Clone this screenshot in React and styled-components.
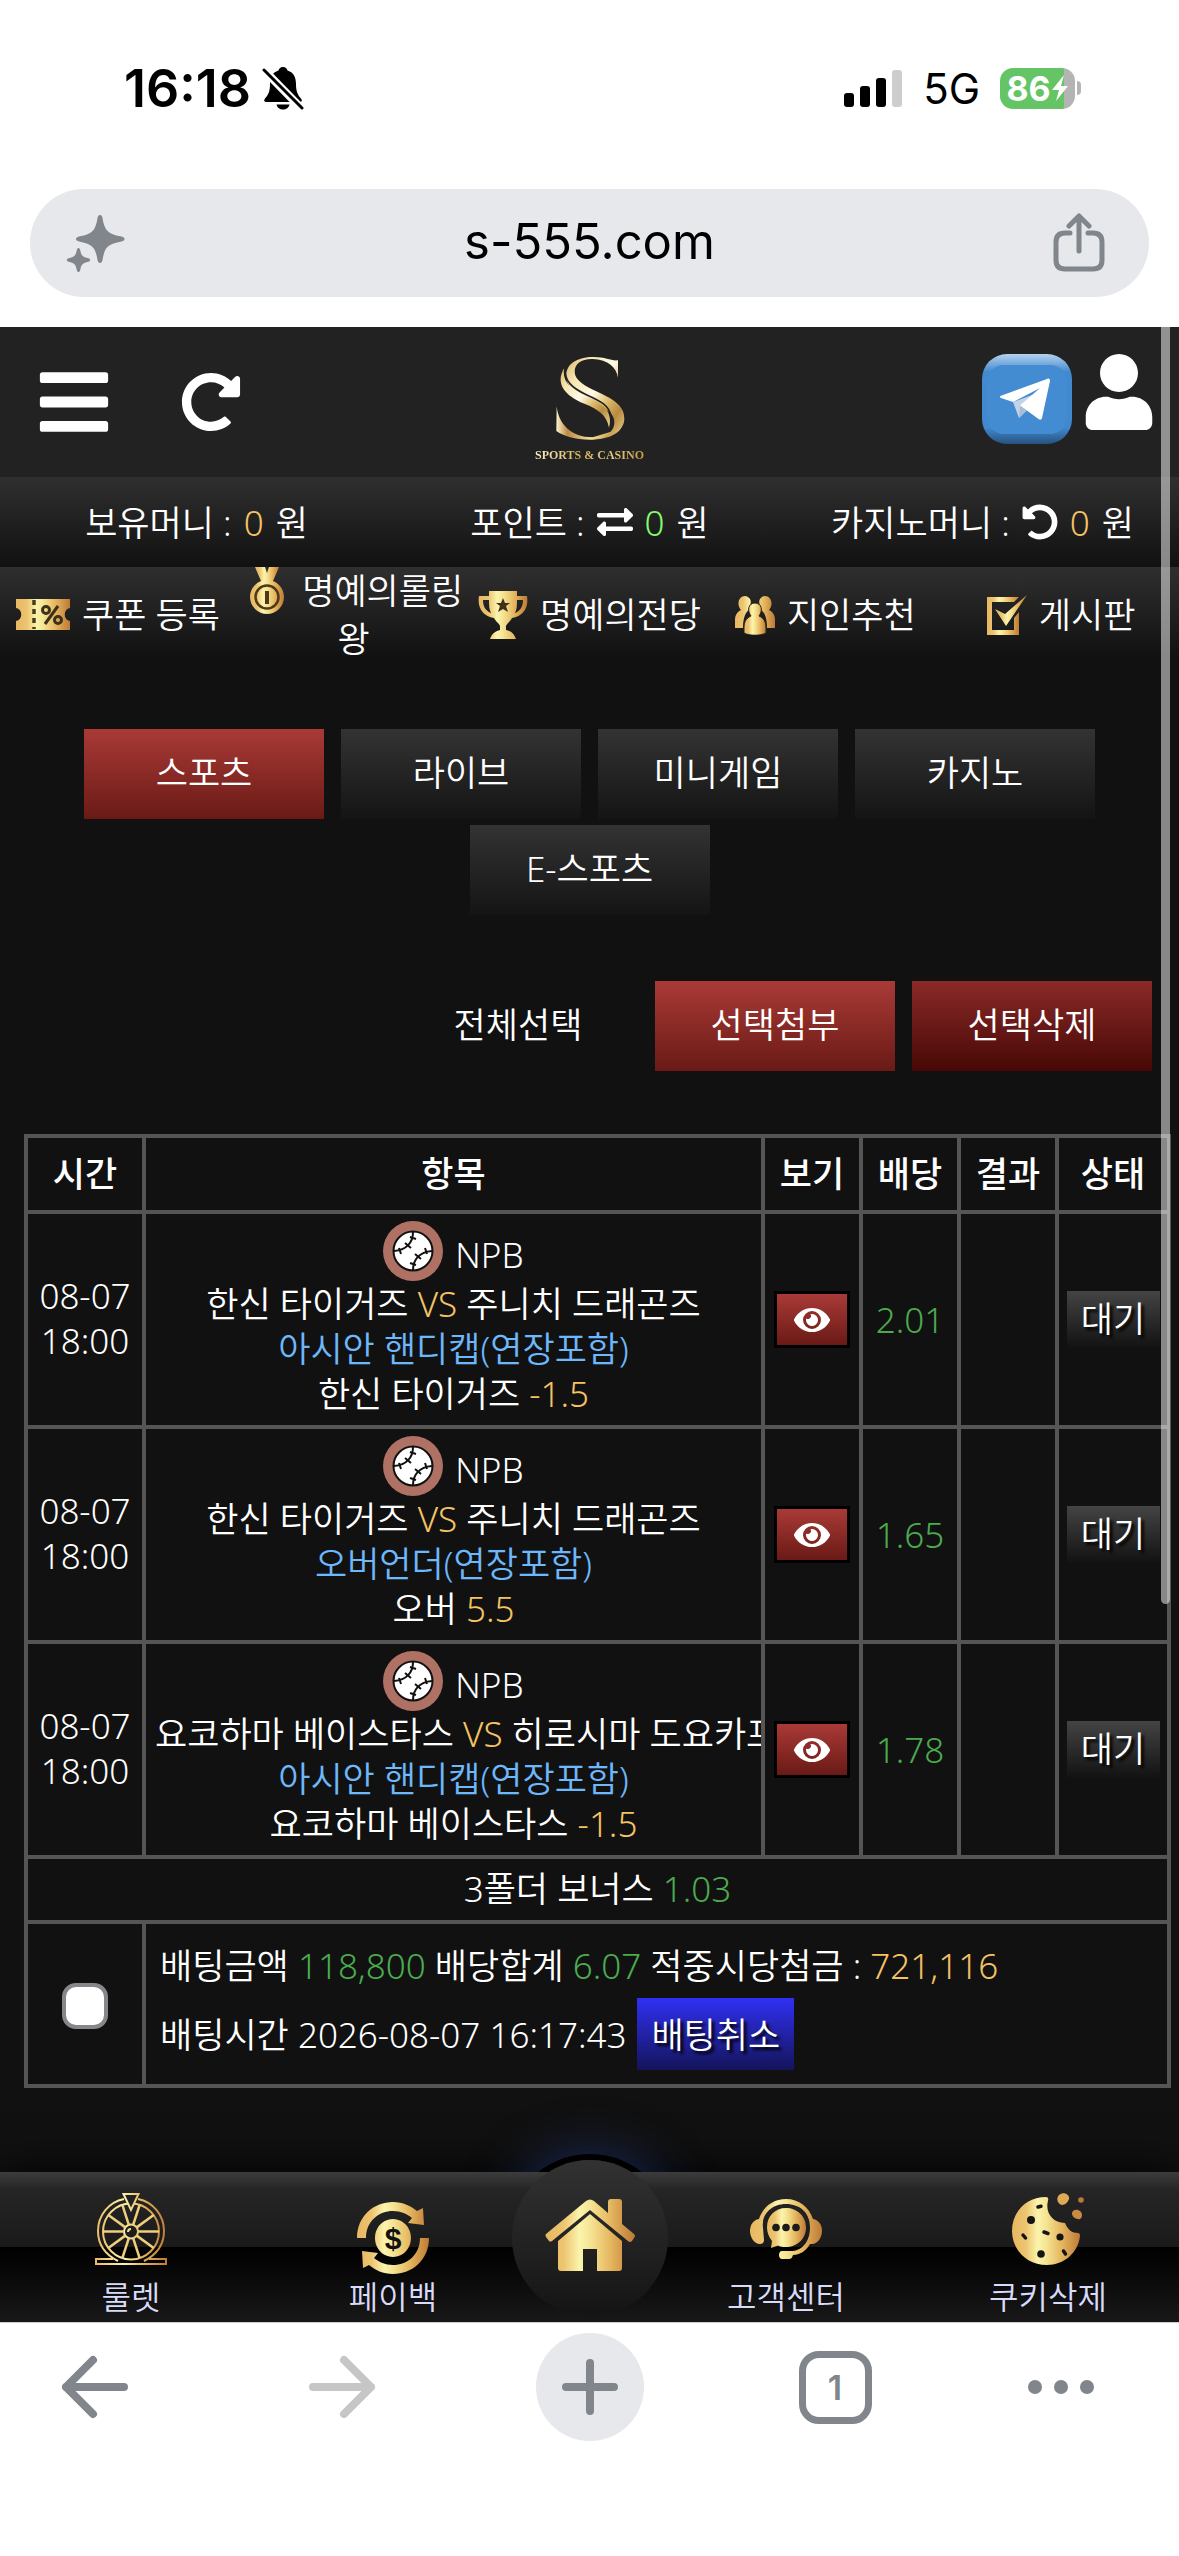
import React, { useState } from 'react';
import styled, { createGlobalStyle, css } from 'styled-components';
import { FaBars, FaRedoAlt, FaUser, FaExchangeAlt, FaUndoAlt, FaEye } from 'react-icons/fa';

const GlobalStyle = createGlobalStyle`
  * {
    box-sizing: border-box;
  }

  body {
    margin: 0;
    background: #fff;
    color: #fff;
    font-family: 'Noto Sans', 'Noto Sans CJK KR', sans-serif;
    font-size: 35px;
    font-weight: 350;
    line-height: 45px;
  }

  button, input {
    font: inherit;
    color: inherit;
    border: 0;
    padding: 0;
    background: none;
  }

  a {
    color: inherit;
    text-decoration: none;
  }

  svg {
    display: block;
    flex: none;
  }
`;

const Shell = styled.div`
  display: flex;
  flex-direction: column;
  min-height: 100vh;
`;

/* ---------- phone and browser chrome ---------- */

const StatusBar = styled.div`
  display: flex;
  justify-content: space-between;
  align-items: center;
  height: 176px;
  padding: 0 98px 0 124px;
  color: #000;
  font-family: Inter, 'Liberation Sans', sans-serif;
`;

const StatusGroup = styled.div`
  display: flex;
  align-items: center;
  gap: ${props => props.$gap}px;
`;

const Clock = styled.span`
  font-size: 52px;
  font-weight: 600;
`;

const Network = styled.span`
  font-size: 42px;
  font-weight: 400;
`;

const Battery = styled.div`
  display: flex;
  align-items: center;
  gap: 2px;

  &::after {
    content: '';
    width: 4px;
    height: 14px;
    border-radius: 0 4px 4px 0;
    background: #b4b4b4;
  }
`;

const BatteryLevel = styled.div`
  display: flex;
  align-items: center;
  justify-content: center;
  width: 75px;
  height: 41px;
  border-radius: 13px;
  background: linear-gradient(to right, #65c466 86%, #b4b4b4 86%);
  color: #fff;
  font-size: 34px;
  font-weight: 700;
`;

const AddressRow = styled.div`
  padding: 13px 30px 30px;
`;

const AddressBar = styled.div`
  display: flex;
  align-items: center;
  justify-content: space-between;
  height: 108px;
  padding: 0 44px 0 36px;
  border-radius: 54px;
  background: #e7e8ec;
  color: #80868b;
`;

const Url = styled.span`
  padding-bottom: 4px;
  color: #000;
  font-family: Inter, 'Liberation Sans', sans-serif;
  font-size: 49px;
  font-weight: 400;
`;

const BrowserBar = styled.nav`
  position: relative;
  display: grid;
  grid-template-columns: 190fr 304fr 191fr 300fr 152fr;
  align-content: start;
  align-items: center;
  justify-items: center;
  min-height: 234px;
  padding: 10px 42px 0 0;
  border-top: 1px solid #ccc;
  background: #fff;
  color: #80868b;
`;

const BrowserButton = styled.button`
  color: ${props => (props.disabled ? '#c6c6c6' : '#80868b')};
`;

const NewTab = styled(BrowserButton)`
  display: grid;
  place-items: center;
  width: 108px;
  height: 108px;
  border-radius: 50%;
  background: #e7e8ec;
`;

const TabCount = styled(BrowserButton)`
  width: 73px;
  height: 73px;
  border: 7px solid #80868b;
  border-radius: 20px;
  font-family: Inter, 'Liberation Sans', sans-serif;
  font-size: 34px;
  font-weight: 600;
`;

/* ---------- site ---------- */

const Site = styled.div`
  position: relative;
  display: flex;
  flex-direction: column;
  flex: 1;
  background: #111;
`;

const ScrollThumb = styled.div`
  position: absolute;
  z-index: 5;
  top: 0;
  right: 9px;
  width: 9px;
  height: 64%;
  border-radius: 0 0 5px 5px;
  background: rgba(255, 255, 255, 0.5);
`;

const Header = styled.header`
  display: grid;
  grid-template-columns: 1fr auto 1fr;
  align-items: center;
  height: 150px;
  padding: 0 22px 0 35px;
  background: #222;
`;

const HeaderSide = styled.div`
  display: flex;
  align-items: center;
  gap: 68px;
`;

const HeaderEnd = styled(HeaderSide)`
  align-items: flex-start;
  justify-content: flex-end;
  gap: 9px;
  padding-bottom: 6px;
`;

const LogoLink = styled.a`
  display: flex;
  flex-direction: column;
  align-items: center;
  gap: 7px;
  padding: 14px 13px 0 0;
`;

const LogoText = styled.span`
  background: linear-gradient(to right, #fdf3cc, #d9b25c 40%, #e8cd86 70%, #c99a3f);
  background-clip: text;
  color: transparent;
  font-family: 'Liberation Serif', serif;
  font-size: 12px;
  font-weight: 700;
  line-height: 16px;
  white-space: nowrap;
`;

const barGradient = css`
  background: linear-gradient(#2f2f2f, #111);
`;

const MoneyBar = styled.div`
  display: grid;
  grid-template-columns: repeat(3, 1fr);
  height: 90px;
  ${barGradient}
`;

const Money = styled.div`
  display: flex;
  align-items: center;
  justify-content: center;
  gap: 12px;
  white-space: nowrap;
`;

const QuickMenu = styled.nav`
  display: grid;
  grid-template-columns: repeat(5, 1fr);
  align-items: center;
  height: 90px;
  padding-bottom: 4px;
  line-height: 48px;
  text-align: center;
  ${barGradient}

  svg {
    display: inline-block;
    margin: -12px 12px -4px 0;
    vertical-align: middle;
  }
`;

const Tabs = styled.div`
  display: flex;
  flex-wrap: wrap;
  justify-content: center;
  gap: 6px 17px;
  padding: 72px 24px 66px;
`;

const fills = {
  red: 'linear-gradient(#a93a36, #6a1a16)',
  darkRed: 'linear-gradient(#8a2a28, #470805)',
  gray: 'linear-gradient(#333, #141414)',
  none: 'none',
};

const Button = styled.button`
  width: 240px;
  height: 90px;
  padding-bottom: 3px;
  background: ${props => fills[props.$fill]};
`;

const Actions = styled.div`
  display: flex;
  justify-content: flex-end;
  gap: 17px;
  padding: 0 27px 63px;
`;

const BetTable = styled.table`
  width: calc(100% - 32px);
  margin: 0 8px 0 24px;
  border-collapse: collapse;
  table-layout: fixed;

  th, td {
    padding: 7px 9px 9px;
    border: 4px solid #555;
    text-align: center;
    overflow: hidden;
    white-space: nowrap;
  }

  th {
    height: 76px;
    padding: 0 0 2px;
    font-weight: 500;
  }
`;

const Col = styled.col`
  width: ${props => props.$w}px;
`;

const TimeCell = styled.td`
  && {
    padding: 0 0 3px;
    white-space: normal;
  }
`;

const CenterCell = styled.td`
  && {
    padding: 0;
  }
`;

const League = styled.div`
  display: flex;
  justify-content: center;
  gap: 12px;
  line-height: 68px;
  height: 60px;
`;

const Gold = styled.span`
  color: #f5c364;
`;

const Green = styled.span`
  color: ${props => (props.$bright ? '#83fb6c' : '#4bab4f')};
`;

const Market = styled.div`
  color: #6db7fb;
`;

const ViewButton = styled.button`
  display: inline-grid;
  place-items: center;
  width: 76px;
  height: 57px;
  border: 3px solid #000;
  background: ${fills.red};
  vertical-align: middle;
`;

const Status = styled.span`
  display: inline-block;
  width: 93px;
  height: 57px;
  background: linear-gradient(#444, #121212);
  line-height: 55px;
  text-shadow: 3px 3px 3px #000;
  vertical-align: middle;
`;

const BonusCell = styled.td`
  && {
    height: 65px;
  }
`;

const SummaryCell = styled.td`
  && {
    padding: 19px 14px 14px;
    text-align: left;
  }
`;

const SummaryLine = styled.div`
  display: flex;
  align-items: center;
  gap: 11px;
  padding-top: ${props => props.$top || 0}px;
`;

const CancelButton = styled.button`
  height: 72px;
  padding: 0 14px;
  background: linear-gradient(#3030f4, #14145a);
  text-shadow: 3px 3px 3px #000;
`;

const Checkbox = styled.input`
  appearance: none;
  display: inline-block;
  width: 46px;
  height: 46px;
  margin: 0;
  border: 4px solid #87878b;
  border-radius: 14px;
  background: #fff;
  vertical-align: middle;

  &:checked {
    background: #3478f6;
  }
`;

const BottomNav = styled.div`
  position: relative;
  isolation: isolate;
  margin-top: auto;
`;

/* ring and glow sit under the bar, only the top of them shows */
const HomeGlow = styled.div`
  position: absolute;
  z-index: 0;
  top: -12px;
  left: calc(50% - 78px);
  width: 156px;
  height: 156px;
  border-radius: 50%;
  box-shadow: 0 0 0 6px #000, 0 0 50px 6px #1b2c5c;
`;

const NavBar = styled.nav`
  position: relative;
  z-index: 1;
  display: grid;
  grid-template-columns: 2fr 2fr 1fr 2fr 2fr;
  height: 150px;
  background: linear-gradient(#3c3c3c, #252525 12%, #1a1a1a 50%, #000 50%, #181818);
`;

const NavShadow = styled.div`
  position: absolute;
  inset: 0;
  box-shadow: 0 0 40px #000;
`;

const NavItem = styled.a`
  display: flex;
  flex-direction: column;
  align-items: center;
  justify-content: flex-end;
  padding-bottom: 3px;
  gap: ${props => props.$gap}px;
  color: #d9dbfa;
  font-size: 32px;
`;

const HomeLink = styled.a`
  display: grid;
  place-items: center;
  justify-self: center;
  width: 156px;
  height: 156px;
  margin: -12px -13px 0;
  padding-bottom: 6px;
  border-radius: 50%;
  background: linear-gradient(#323232, #141414);
`;

/* ---------- drawings ---------- */

const GoldFill = ({ id }) => (
  <linearGradient id={id} x1="0" x2="1" y1="0" y2="0">
    <stop offset="0" stopColor="#e9b762" />
    <stop offset="0.2" stopColor="#ecc46f" />
    <stop offset="0.38" stopColor="#fbf4ac" />
    <stop offset="0.5" stopColor="#f6e494" />
    <stop offset="0.72" stopColor="#e6b860" />
    <stop offset="1" stopColor="#bd7a36" />
  </linearGradient>
);

const BellOff = () => (
  <svg width="42" height="44" viewBox="0 0 42 44" fill="#000">
    <path d="M21 1c-3 0-4 2-4.500 3.500C10 6.500 8 12 8 18c0 8-2 11-5 14.500C1.500 34.500 2 36 4.500 36h33c2.500 0 3-1.500 1.500-3.500C36 29 34 26 34 18c0-6-2-11.500-8.500-13.500C25 3 24 1 21 1z" />
    <path d="M14.500 38.500h13c-.5 3-3.500 5-6.500 5s-6-2-6.500-5z" />
    <path d="M1 3l39 40" stroke="#fff" strokeWidth="8" />
    <path d="M2 4l38 38" stroke="#000" strokeWidth="3" strokeLinecap="round" />
  </svg>
);

const Signal = () => (
  <svg width="59" height="38" viewBox="0 0 59 38">
    <rect x="0" y="24" width="10" height="14" rx="3" />
    <rect x="16" y="17" width="10" height="21" rx="3" />
    <rect x="32" y="9" width="10" height="29" rx="3" />
    <rect x="48" y="1" width="10" height="37" rx="3" fill="#cdcdcd" />
  </svg>
);

const Bolt = () => (
  <svg width="18" height="28" viewBox="0 0 18 28" fill="#fff">
    <path d="M13 1L1 16h7L5 27l12-15h-7z" />
  </svg>
);

const Sparkle = () => (
  <svg width="60" height="60" viewBox="0 0 60 60" fill="#80868b">
    <path d="M34 2c1.500 0 2 1 2.500 3 2 12 5 16 19 18.500 4 .8 4 4 0 5C41 31 38.500 35 36.500 47c-.5 4-4.500 4-5 0C29.500 35 27 31 13 28.500c-4-1-4-4.200 0-5C27 21 29.500 17 31.500 5c.5-2 1-3 2.500-3z" />
    <path d="M12.500 35c1 0 1.500 1 1.800 2.500.8 5 2.500 6.500 8 7.700 2.500.6 2.500 2.800 0 3.500-5.500 1.300-7.200 3-8 8-.4 3-3.200 3-3.600 0-.8-5-2.500-6.700-8-8-2.500-.7-2.500-2.900 0-3.500 5.500-1.200 7.200-2.700 8-7.700.3-1.500.8-2.500 1.800-2.500z" />
  </svg>
);

const Share = () => (
  <svg width="52" height="60" viewBox="0 0 52 60" fill="none" stroke="#80868b" strokeWidth="5" strokeLinecap="round" strokeLinejoin="round">
    <path d="M17 20h-5c-6 0-9 3-9 9v18c0 6 3 9 9 9h28c6 0 9-3 9-9V29c0-6-3-9-9-9h-5M26 38V4M16 13L26 3l10 10" />
  </svg>
);

const Arrow = ({ flip }) => (
  <svg width="68" height="68" viewBox="0 0 68 68" fill="none" stroke="currentColor" strokeWidth="8" strokeLinecap="round" strokeLinejoin="round">
    <path d={flip ? 'M5 34h58M36 7l27 27-27 27' : 'M63 34H5M32 7L5 34l27 27'} />
  </svg>
);

const Plus = () => (
  <svg width="56" height="56" viewBox="0 0 56 56" stroke="currentColor" strokeWidth="8" strokeLinecap="round">
    <path d="M28 4v48M4 28h48" />
  </svg>
);

const Dots = () => (
  <svg width="68" height="16" viewBox="0 0 68 16" fill="currentColor">
    <circle cx="8" cy="8" r="7" />
    <circle cx="34" cy="8" r="7" />
    <circle cx="60" cy="8" r="7" />
  </svg>
);

const LogoMark = () => (
  <svg width="70" height="84" viewBox="102 47 210 252">
    <defs>
      <linearGradient id="mark" x1="0" y1="0" x2="1" y2="1">
        <stop offset="0" stopColor="#d9b366" />
        <stop offset="0.2" stopColor="#f7e6b0" />
        <stop offset="0.45" stopColor="#fffbe8" />
        <stop offset="0.62" stopColor="#dfbd6e" />
        <stop offset="0.78" stopColor="#b98a40" />
        <stop offset="1" stopColor="#f0d894" />
      </linearGradient>
      <linearGradient id="tail" x1="0" y1="0" x2="1" y2="0">
        <stop offset="0" stopColor="#fdf3cf" />
        <stop offset="0.2" stopColor="#bb8c44" />
        <stop offset="0.6" stopColor="#f3dfa0" />
        <stop offset="1" stopColor="#c99d50" />
      </linearGradient>
    </defs>
    <path fill="url(#mark)" d="M291 112C286 82 262 57 215 56c-34-1-54 14-54 38 0 24 28 42 68 60 52 24 82 44 81 82-2 40-44 62-100 62v-7c45 0 68-14 70-43 2-26-20-42-58-58-52-22-86-44-86-86 0-34 34-54 80-54 42 0 50 12 75 10z" />
    <path fill="url(#tail)" d="M107 198c6 54 44 93 108 93l60-18c-16 18-36 25-68 25-46 0-78-10-101-26z" />
    <path fill="url(#mark)" d="M130 82c-8 38 14 62 62 84 48 20 86 42 72 96-7-38-32-54-72-71-52-22-94-56-62-109z" />
    <path fill="none" stroke="#222" strokeWidth="5" d="M132 84c-2 36 18 58 64 79 40 18 70 32 74 66" />
  </svg>
);

const Telegram = () => (
  <svg width="90" height="90" viewBox="0 0 90 90">
    <defs>
      <linearGradient id="tgShade" x1="0" y1="0" x2="0" y2="1">
        <stop offset="0" stopColor="#b4d3ee" />
        <stop offset="0.2" stopColor="#4289cf" />
        <stop offset="0.82" stopColor="#4188ce" />
        <stop offset="1" stopColor="#26527e" />
      </linearGradient>
    </defs>
    <rect width="90" height="90" rx="25" fill="url(#tgShade)" />
    <rect x="5" y="11" width="80" height="69" rx="17" fill="#448cd1" />
    <path d="M31 48l6 16 7-7 14-19z" fill="#c3d4e8" />
    <path d="M65 25c2-1 3 0 3 2l-8 37c-.6 2-2 2-3.500 1L38 51.500 58 34 31 48l-12-4c-1.500-.6-1.500-1.500 0-2.200z" fill="#fff" />
    <path d="M37 64l1-12.500 7 5z" fill="#a9bed6" />
  </svg>
);

const Ball = () => (
  <svg width="60" height="60" viewBox="0 0 60 60">
    <circle cx="30" cy="30" r="30" fill="#b07165" />
    <circle cx="30" cy="30" r="19.500" fill="#fff" stroke="#111" strokeWidth="2" />
    <path d="M30 11c0 10-6 18-19 19M30 49c0-10 6-18 19-19M27 16l6 2M22 22l6 5M16 27l2 6M33 44l-6-2M38 38l-6-5M44 33l-2-6" fill="none" stroke="#111" strokeWidth="2" />
  </svg>
);

const Coupon = () => (
  <svg width="54" height="31" viewBox="0 0 54 31">
    <defs><GoldFill id="gCoupon" /></defs>
    <path fill="url(#gCoupon)" d="M0 0h54v9c-7 1-7 12 0 13v9H0v-9c7-1 7-12 0-13z" />
    <path d="M18 1v29" stroke="#4d3d1e" strokeWidth="3.500" strokeDasharray="5 4" />
    <path d="M42 7L29 25" stroke="#3d3018" strokeWidth="3" />
    <circle cx="30" cy="11" r="3.500" fill="none" stroke="#3d3018" strokeWidth="3" />
    <circle cx="42" cy="21" r="3.500" fill="none" stroke="#3d3018" strokeWidth="3" />
  </svg>
);

const Medal = () => (
  <svg width="46" height="48" viewBox="0 0 46 48">
    <defs><GoldFill id="gMedal" /></defs>
    <path fill="url(#gMedal)" d="M11 0h10l2 6 2-6h10l-6 14H17z" />
    <circle cx="23" cy="30" r="17" fill="url(#gMedal)" />
    <circle cx="23" cy="30" r="11.500" fill="none" stroke="#4d3b18" strokeWidth="2.500" />
    <path d="M21 24h4v13h-4z" fill="#4d3b18" />
  </svg>
);

const Trophy = () => (
  <svg width="50" height="50" viewBox="0 0 50 50">
    <defs><GoldFill id="gTrophy" /></defs>
    <path fill="url(#gTrophy)" d="M11 1h28v5h10c2 12-4 20-15 22-2 4-5 5-6 8v4c4 1 8 3 10 9H12c2-6 6-8 10-9v-4c-1-3-4-4-6-8C5 26-1 18 1 6h10zM5 10c0 7 3 11 8 13-2-4-2-8-2-13zM45 10h-6c0 5 0 9-2 13 5-2 8-6 8-13z" />
    <path fill="#3f3117" d="M25 8l2 5h5l-4 3 2 6-5-3-5 3 2-6-4-3h5z" />
  </svg>
);

const Friends = () => (
  <svg width="40" height="40" viewBox="0 0 40 40">
    <defs><GoldFill id="gFriends" /></defs>
    <path fill="url(#gFriends)" d="M10 1a6 6 0 0 1 5 9c-2 4-1 5-4 8-2 4-3 8-3 15H0v-8c0-5 2-8 6-10-5-6-2-14 4-14zM30 1a6 6 0 0 0-5 9c2 4 1 5 4 8 2 4 3 8 3 15h8v-8c0-5-2-8-6-10 5-6 2-14-4-14z" />
    <path fill="url(#gFriends)" stroke="#2a2416" d="M20 8c7 0 8 8 4 13 5 2 7 6 7 12v5c-6 3-16 3-22 0v-5c0-6 2-10 7-12-4-5-3-13 4-13z" />
  </svg>
);

const Board = () => (
  <svg width="40" height="42" viewBox="0 0 40 42">
    <defs><GoldFill id="gBoard" /></defs>
    <path fill="url(#gBoard)" d="M0 3h32l-5 5H5v28h22V24l5-6v23H0z" />
    <path fill="url(#gBoard)" d="M8 15l10 5L40 1 19 32z" />
  </svg>
);

const Roulette = () => (
  <svg width="72" height="72" viewBox="0 0 72 72" fill="none">
    <defs>
      <linearGradient id="gRoulette" gradientUnits="userSpaceOnUse" x1="0" x2="72" y1="0" y2="0">
        <stop offset="0" stopColor="#e9b762" />
        <stop offset="0.4" stopColor="#fbf4ac" />
        <stop offset="0.65" stopColor="#e6b860" />
        <stop offset="1" stopColor="#bd7a36" />
      </linearGradient>
    </defs>
    <g stroke="url(#gRoulette)" strokeWidth="2">
      <path d="M29 6C14 9 3 22 3 38c0 14 8 24 20 30M43 6c15 3 26 16 26 32 0 14-8 24-20 30" />
      <circle cx="36" cy="38.500" r="28" />
      <circle cx="36" cy="38.500" r="7" />
      <path d="M33 39c0-2 1-3 3-3" />
      <path d="M18 66H1v5h70v-5H54" />
    </g>
    {/* one colour per spoke: the gradient would turn with the spoke */}
    {[0, 36, 72, 108, 144, 180, 216, 252, 288, 324].map(a => (
      <path key={a} d="M43 38.500h21" stroke="#f0cf7c" strokeWidth="2.500" transform={`rotate(${a} 36 38.500)`} />
    ))}
    <path d="M28.500 1h15L36 17z" fill="#222" stroke="url(#gRoulette)" strokeWidth="2" />
  </svg>
);

const Payback = () => (
  <svg width="72" height="72" viewBox="0 0 72 72">
    <defs><GoldFill id="gPayback" /></defs>
    <path fill="url(#gPayback)" d="M0 36C0 14 17 0 36 0c10 0 18 4 24 9l6-3 1 17-16-2 4-5c-5-4-11-7-19-7C22 9 9 19 9 36zM72 36c0 22-17 36-36 36-10 0-18-4-24-9l-6 3-1-17 16 2-4 5c5 4 11 7 19 7 14 0 27-10 27-27zM36 17a18 19 0 1 1-.1 0z" />
    <text x="36" y="47" textAnchor="middle" fontFamily="Liberation Sans" fontWeight="700" fontSize="30" fill="#111">$</text>
  </svg>
);

const Home = () => (
  <svg width="90" height="72" viewBox="0 0 90 72">
    <defs><GoldFill id="gHome" /></defs>
    <path fill="url(#gHome)" d="M1 35L41 2q4-3 8 0l14 12V3q0-3 3-3h8q3 0 3 3v22l12 10q2 2 0 4l-2 3q-2 2-4 0L45 11 7 42q-2 1-3 0l-3-4q-1-2 0-3zM13 42l32-27 32 27v27q0 3-3 3H52V50H38v22H16q-3 0-3-3z" />
  </svg>
);

const Support = () => (
  <svg width="72" height="60" viewBox="0 0 72 60">
    <defs><GoldFill id="gSupport" /></defs>
    <path fill="url(#gSupport)" d="M9 20C13 8 23 0 36 0s23 8 27 20c6 1 9 6 9 12s-4 13-10 13h-2c-4 7-10 11-17 11-1 3-2 4-4 4h-7c-2 0-3-2-3-4s1-4 3-4h9c10 0 19-8 19-24C60 14 50 5 36 5S11 15 13 29l1 12c0 3-2 4-4 4-6 0-10-7-10-13s3-11 9-12z" />
    <path fill="url(#gSupport)" d="M36 9c11 0 20 8 20 19.500S47 48 36 48c-3 0-6-.5-8-1.500L21 49l1-7c-3-4-5-8-5-13.500C17 17 25 9 36 9z" />
    <circle cx="26" cy="28.500" r="3.800" fill="#1b1b1b" />
    <circle cx="36" cy="28.500" r="3.800" fill="#1b1b1b" />
    <circle cx="46" cy="28.500" r="3.800" fill="#1b1b1b" />
  </svg>
);

const Cookie = () => (
  <svg width="72" height="72" viewBox="0 0 72 72">
    <defs><GoldFill id="gCookie" /></defs>
    <path fill="url(#gCookie)" d="M34 4q3 0 2 4c-3 11 4 22 17 22 3 7 7 10 13 10q2 0 2 3C66 60 52 72 35 72 15 72 0 57 0 38S14 4 34 4z" />
    <path fill="#dfa955" d="M47 2c5-4 11 0 10 4-1 3-4 6-7 6-5-1-6-7-3-10z" />
    <circle cx="69" cy="7" r="2.800" fill="#bd7a36" />
    <path fill="#c98a41" d="M61 18c4-3 9 0 9 4 0 3-2 5-4 4-4 0-8-5-5-8z" />
    <g fill="#151515">
      <circle cx="19" cy="27" r="4" />
      <circle cx="48" cy="44" r="3.600" />
      <circle cx="29" cy="61" r="3.800" />
    </g>
    <path d="M26 14l3-.8M11 42l2.500 3M32 39l4 1.500M51.500 58l2 3" stroke="#151515" strokeWidth="3.500" strokeLinecap="round" />
  </svg>
);

/* ---------- data ---------- */

const categories = ['스포츠', '라이브', '미니게임', '카지노', 'E-스포츠'];

const quickLinks = [
  { label: '쿠폰 등록', icon: <Coupon /> },
  { label: '명예의롤링왕', icon: <Medal /> },
  { label: '명예의전당', icon: <Trophy /> },
  { label: '지인추천', icon: <Friends /> },
  { label: '게시판', icon: <Board /> },
];

const bets = [
  { home: '한신 타이거즈', away: '주니치 드래곤즈', market: '아시안 핸디캡(연장포함)', pick: '한신 타이거즈', line: '-1.5', odds: '2.01' },
  { home: '한신 타이거즈', away: '주니치 드래곤즈', market: '오버언더(연장포함)', pick: '오버', line: '5.5', odds: '1.65' },
  { home: '요코하마 베이스타스', away: '히로시마 도요카프', market: '아시안 핸디캡(연장포함)', pick: '요코하마 베이스타스', line: '-1.5', odds: '1.78' },
];

const BetRow = ({ bet }) => (
  <tr>
    <TimeCell>
      <div>08-07</div>
      <div>18:00</div>
    </TimeCell>
    <td>
      <League><Ball />NPB</League>
      <div>{bet.home} <Gold>VS</Gold> {bet.away}</div>
      <Market>{bet.market}</Market>
      <div>{bet.pick} <Gold>{bet.line}</Gold></div>
    </td>
    <CenterCell><ViewButton aria-label="보기"><FaEye size={36} /></ViewButton></CenterCell>
    <CenterCell><Green>{bet.odds}</Green></CenterCell>
    <CenterCell />
    <CenterCell><Status>대기</Status></CenterCell>
  </tr>
);

const App = () => {
  const [category, setCategory] = useState('스포츠');
  const [checked, setChecked] = useState(false);

  return (
    <Shell>
      <GlobalStyle />

      <StatusBar>
        <StatusGroup $gap={11}>
          <Clock>16:18</Clock>
          <BellOff />
        </StatusGroup>
        <StatusGroup $gap={20}>
          <Signal />
          <Network>5G</Network>
          <Battery><BatteryLevel>86<Bolt /></BatteryLevel></Battery>
        </StatusGroup>
      </StatusBar>
      <AddressRow>
        <AddressBar>
          <button aria-label="AI"><Sparkle /></button>
          <Url>s-555.com</Url>
          <button aria-label="공유"><Share /></button>
        </AddressBar>
      </AddressRow>

      <Site>
        <ScrollThumb />
        <Header>
          <HeaderSide>
            <button aria-label="메뉴"><FaBars size={78} /></button>
            <button aria-label="새로고침"><FaRedoAlt size={60} /></button>
          </HeaderSide>
          <LogoLink href="#">
            <LogoMark />
            <LogoText>SPORTS &amp; CASINO</LogoText>
          </LogoLink>
          <HeaderEnd>
            <a href="#" aria-label="텔레그램"><Telegram /></a>
            <a href="#" aria-label="내 정보"><FaUser size={76} /></a>
          </HeaderEnd>
        </Header>

        <MoneyBar>
          <Money>보유머니 : <Gold>0</Gold> 원</Money>
          <Money>포인트 : <FaExchangeAlt size={36} /> <Green $bright>0</Green> 원</Money>
          <Money>카지노머니 : <FaUndoAlt size={36} /> <Gold>0</Gold> 원</Money>
        </MoneyBar>

        <QuickMenu>
          {quickLinks.map(link => (
            <a key={link.label} href="#">{link.icon}{link.label}</a>
          ))}
        </QuickMenu>

        <Tabs>
          {categories.map(name => (
            <Button key={name} $fill={name === category ? 'red' : 'gray'} onClick={() => setCategory(name)}>
              {name}
            </Button>
          ))}
        </Tabs>

        <Actions>
          <Button $fill="none" onClick={() => setChecked(true)}>전체선택</Button>
          <Button $fill="red">선택첨부</Button>
          <Button $fill="darkRed">선택삭제</Button>
        </Actions>

        <BetTable>
          <colgroup>
            <Col $w={118} />
            <col />
            <Col $w={98} />
            <Col $w={98} />
            <Col $w={98} />
            <Col $w={112} />
          </colgroup>
          <thead>
            <tr>
              <th>시간</th>
              <th>항목</th>
              <th>보기</th>
              <th>배당</th>
              <th>결과</th>
              <th>상태</th>
            </tr>
          </thead>
          <tbody>
            {bets.map(bet => <BetRow key={bet.odds} bet={bet} />)}
            <tr>
              <BonusCell colSpan={6}>3폴더 보너스 <Green>1.03</Green></BonusCell>
            </tr>
            <tr>
              <CenterCell>
                <Checkbox
                  type="checkbox"
                  aria-label="배팅 선택"
                  checked={checked}
                  onChange={e => setChecked(e.target.checked)}
                />
              </CenterCell>
              <SummaryCell colSpan={5}>
                <div>배팅금액 <Green>118,800</Green> 배당합계 <Green>6.07</Green> 적중시당첨금 : <Gold>721,116</Gold></div>
                <SummaryLine $top={10}>
                  배팅시간 2026-08-07 16:17:43
                  <CancelButton>배팅취소</CancelButton>
                </SummaryLine>
              </SummaryCell>
            </tr>
          </tbody>
        </BetTable>

        <BottomNav>
          <NavShadow />
          <HomeGlow />
          <NavBar>
            <NavItem href="#" $gap={9}><Roulette />룰렛</NavItem>
            <NavItem href="#" $gap={0}><Payback />페이백</NavItem>
            <HomeLink href="#" aria-label="홈"><Home /></HomeLink>
            <NavItem href="#" $gap={15}><Support />고객센터</NavItem>
            <NavItem href="#" $gap={9}><Cookie />쿠키삭제</NavItem>
          </NavBar>
        </BottomNav>
      </Site>

      <BrowserBar>
        <BrowserButton aria-label="뒤로"><Arrow /></BrowserButton>
        <BrowserButton aria-label="앞으로" disabled><Arrow flip /></BrowserButton>
        <NewTab aria-label="새 탭"><Plus /></NewTab>
        <TabCount>1</TabCount>
        <BrowserButton aria-label="더보기"><Dots /></BrowserButton>
      </BrowserBar>
    </Shell>
  );
};

export default App;
